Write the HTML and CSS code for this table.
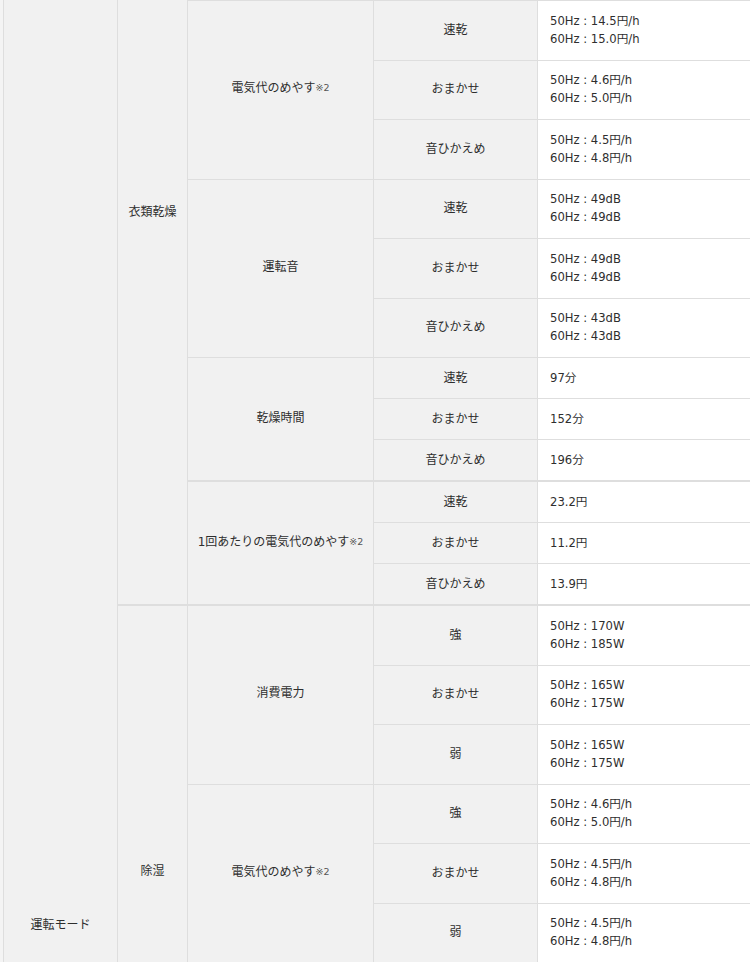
FILE: index.html
```html
<!DOCTYPE html>
<html lang="ja">
<head>
<meta charset="utf-8">
<link rel="stylesheet" href="styles.css">
</head>
<body>
<div class="spec">
  <div class="mode">運転モード</div>
  <div class="groups">
    <div class="group">
      <div class="cat cat-dry">衣類乾燥</div>
      <div class="items first">
        <div class="item">
          <div class="label">電気代のめやす<sup>※2</sup></div>
          <div class="rows">
            <div class="row tall"><div class="sub">速乾</div><div class="val">50Hz : 14.5円/h<br>60Hz : 15.0円/h</div></div>
            <div class="row tall"><div class="sub">おまかせ</div><div class="val">50Hz : 4.6円/h<br>60Hz : 5.0円/h</div></div>
            <div class="row tall"><div class="sub">音ひかえめ</div><div class="val">50Hz : 4.5円/h<br>60Hz : 4.8円/h</div></div>
          </div>
        </div>
        <div class="item">
          <div class="label">運転音</div>
          <div class="rows">
            <div class="row tall"><div class="sub">速乾</div><div class="val">50Hz : 49dB<br>60Hz : 49dB</div></div>
            <div class="row tall"><div class="sub">おまかせ</div><div class="val">50Hz : 49dB<br>60Hz : 49dB</div></div>
            <div class="row tall"><div class="sub">音ひかえめ</div><div class="val">50Hz : 43dB<br>60Hz : 43dB</div></div>
          </div>
        </div>
        <div class="item">
          <div class="label">乾燥時間</div>
          <div class="rows">
            <div class="row short"><div class="sub">速乾</div><div class="val">97分</div></div>
            <div class="row short"><div class="sub">おまかせ</div><div class="val">152分</div></div>
            <div class="row short"><div class="sub">音ひかえめ</div><div class="val">196分</div></div>
          </div>
        </div>
        <div class="item split">
          <div class="label">1回あたりの電気代のめやす<sup>※2</sup></div>
          <div class="rows">
            <div class="row short"><div class="sub">速乾</div><div class="val">23.2円</div></div>
            <div class="row short"><div class="sub">おまかせ</div><div class="val">11.2円</div></div>
            <div class="row short"><div class="sub">音ひかえめ</div><div class="val">13.9円</div></div>
          </div>
        </div>
      </div>
    </div>
    <div class="group split">
      <div class="cat cat-dehum">除湿</div>
      <div class="items">
        <div class="item">
          <div class="label">消費電力</div>
          <div class="rows">
            <div class="row tall"><div class="sub">強</div><div class="val">50Hz : 170W<br>60Hz : 185W</div></div>
            <div class="row tall"><div class="sub">おまかせ</div><div class="val">50Hz : 165W<br>60Hz : 175W</div></div>
            <div class="row tall"><div class="sub">弱</div><div class="val">50Hz : 165W<br>60Hz : 175W</div></div>
          </div>
        </div>
        <div class="item">
          <div class="label">電気代のめやす<sup>※2</sup></div>
          <div class="rows">
            <div class="row tall"><div class="sub">強</div><div class="val">50Hz : 4.6円/h<br>60Hz : 5.0円/h</div></div>
            <div class="row tall"><div class="sub">おまかせ</div><div class="val">50Hz : 4.5円/h<br>60Hz : 4.8円/h</div></div>
            <div class="row tall"><div class="sub">弱</div><div class="val">50Hz : 4.5円/h<br>60Hz : 4.8円/h</div></div>
          </div>
        </div>
      </div>
    </div>
  </div>
</div>
</body>
</html>
```

FILE: styles.css
```css
html, body {
  margin: 0;
  padding: 0;
  background: #f4f4f4;
  overflow: hidden;
}

.spec {
  display: flex;
  margin-left: 3px;
  font-family: "DejaVu Sans", "Noto Sans CJK JP", sans-serif;
  font-size: 12px;
  line-height: 18px;
  color: #2e2e2e;
}

.mode {
  box-sizing: border-box;
  width: 115px;
  flex: none;
  background: #f1f1f1;
  border-left: 1px solid #dedede;
  border-right: 1px solid #dedede;
  display: flex;
  justify-content: center;
  align-items: flex-start;
  padding-top: 916px;
}

.groups {
  flex: 1;
  display: flex;
  flex-direction: column;
}

.group {
  display: flex;
}

.group.split {
  border-top: 1px solid #dedede;
}

.cat {
  box-sizing: border-box;
  width: 70px;
  flex: none;
  background: #f1f1f1;
  border-right: 1px solid #dedede;
  border-bottom: 1px solid #dedede;
  display: flex;
  justify-content: center;
  align-items: flex-start;
}

.cat-dry {
  padding-top: 203px;
}

.cat-dehum {
  padding-top: 256px;
}

.items {
  flex: 1;
  display: flex;
  flex-direction: column;
}

.items.first {
  border-top: 1px solid #dedede;
}

.item {
  display: flex;
}

.item.split {
  border-top: 1px solid #dedede;
}

.label {
  box-sizing: border-box;
  width: 186px;
  flex: none;
  background: #f1f1f1;
  border-right: 1px solid #dedede;
  border-bottom: 1px solid #dedede;
  display: flex;
  justify-content: center;
  align-items: center;
  text-align: center;
  padding-bottom: 3px;
}

.label sup {
  font-size: 9.5px;
  line-height: 0;
  vertical-align: 5px;
  color: #555;
}

.rows {
  flex: 1;
  display: flex;
  flex-direction: column;
}

.row {
  display: flex;
  box-sizing: border-box;
  border-bottom: 1px solid #dedede;
}

.row.tall {
  height: 59.5px;
}

.row.short {
  height: 41px;
}

.sub {
  box-sizing: border-box;
  width: 164px;
  flex: none;
  background: #f1f1f1;
  border-right: 1px solid #dedede;
  display: flex;
  justify-content: center;
  align-items: center;
  padding-bottom: 1px;
}

.val {
  flex: 1;
  background: #fff;
  padding-left: 12px;
  padding-bottom: 1px;
  font-size: 11.6px;
  display: flex;
  flex-direction: column;
  justify-content: center;
}
```
